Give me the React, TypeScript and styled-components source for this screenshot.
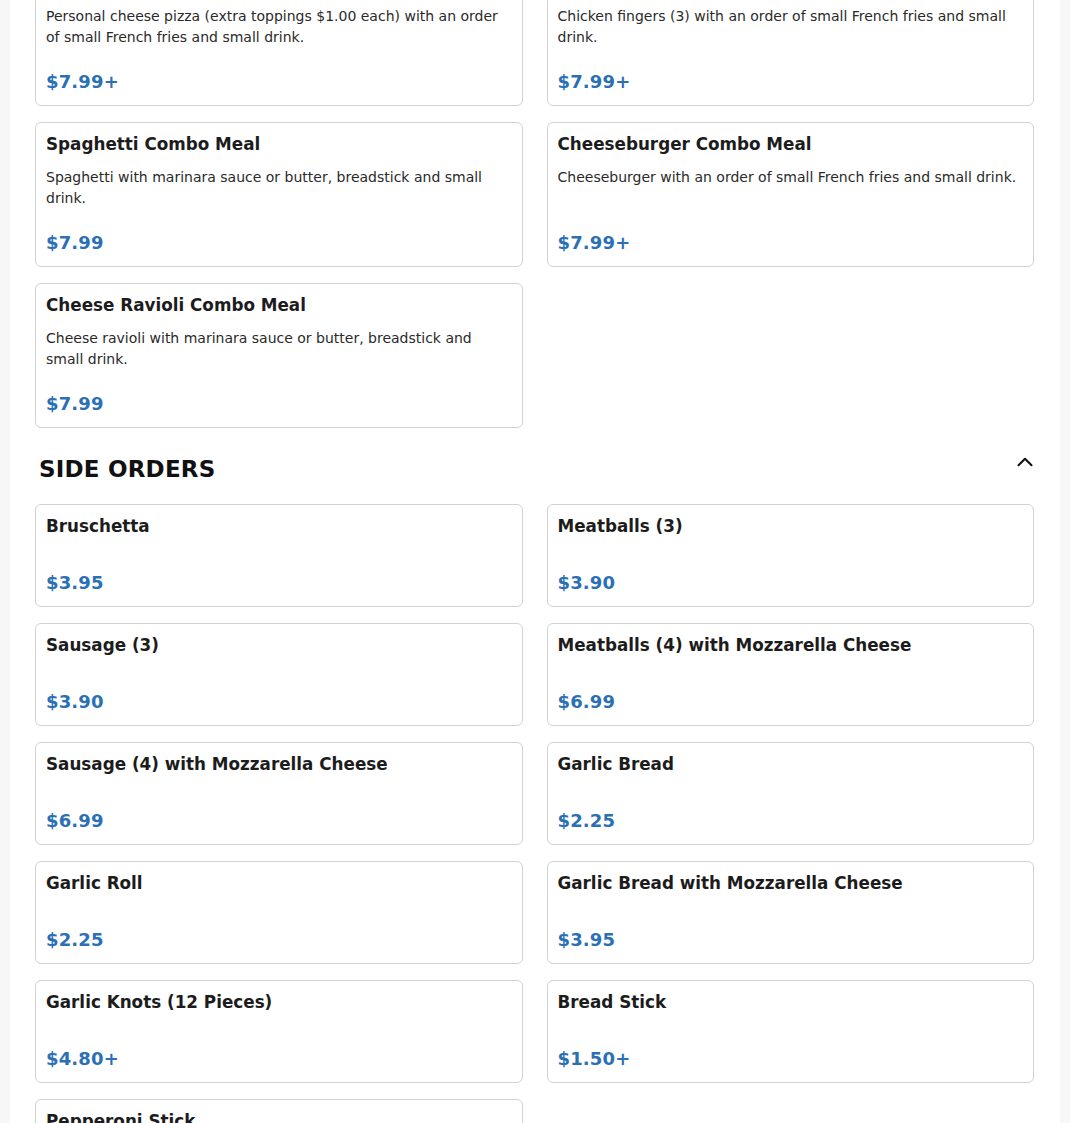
import React, { useLayoutEffect, useRef } from "react";
import styled, { createGlobalStyle } from "styled-components";

const Global = createGlobalStyle`
  html, body { margin: 0; padding: 0; background: #f7f7f7; }
  body { font-family: "DejaVu Sans", Verdana, sans-serif; }
  * { box-sizing: border-box; }
`;

const Page = styled.div`
  margin: 0 10px;
  background: #ffffff;
  padding: 20px 26px 400px 25px;
`;

const Section = styled.section`
  display: flex;
  flex-direction: column;
`;

const SectionHeader = styled.div`
  display: flex;
  align-items: center;
  justify-content: space-between;
  padding: 26px 0 20px 4px;
`;

const SectionTitle = styled.h2`
  margin: 0;
  font-size: 23px;
  line-height: 30px;
  font-weight: 700;
  color: #111;
  letter-spacing: 0.2px;
`;

const Toggle = styled.span`
  display: flex;
  margin-right: -4px;
  margin-top: -14px;
  color: #111;
`;

const Grid = styled.div`
  display: grid;
  grid-template-columns: 1fr 1fr;
  column-gap: 24px;
  row-gap: 16px;
`;

const Card = styled.div`
  display: flex;
  flex-direction: column;
  border: 1px solid #d2d2d2;
  border-radius: 6px;
  padding: 11px 10px 11px;
  background: #fff;
`;

const Title = styled.div`
  font-size: 16.8px;
  line-height: 20px;
  font-weight: 700;
  color: #1c1c1c;
  margin-bottom: 13px;
`;

const Desc = styled.div`
  font-size: 14px;
  line-height: 21px;
  color: #2a2a2a;
`;

const Price = styled.div`
  margin-top: auto;
  padding-top: 22px;
  font-size: 18px;
  line-height: 24px;
  font-weight: 700;
  color: #2b70b5;
  letter-spacing: 0.15px;
`;

type Item = { title: string; desc?: string; price: string };

const combos: Item[] = [
  {
    title: "Kid's Cheese Pizza Combo Meal",
    desc: "Personal cheese pizza (extra toppings $1.00 each) with an order of small French fries and small drink.",
    price: "$7.99+",
  },
  {
    title: "Chicken Fingers Combo Meal",
    desc: "Chicken fingers (3) with an order of small French fries and small drink.",
    price: "$7.99+",
  },
  {
    title: "Spaghetti Combo Meal",
    desc: "Spaghetti with marinara sauce or butter, breadstick and small drink.",
    price: "$7.99",
  },
  {
    title: "Cheeseburger Combo Meal",
    desc: "Cheeseburger with an order of small French fries and small drink.",
    price: "$7.99+",
  },
  {
    title: "Cheese Ravioli Combo Meal",
    desc: "Cheese ravioli with marinara sauce or butter, breadstick and small drink.",
    price: "$7.99",
  },
];

const sides: Item[] = [
  { title: "Bruschetta", price: "$3.95" },
  { title: "Meatballs (3)", price: "$3.90" },
  { title: "Sausage (3)", price: "$3.90" },
  { title: "Meatballs (4) with Mozzarella Cheese", price: "$6.99" },
  { title: "Sausage (4) with Mozzarella Cheese", price: "$6.99" },
  { title: "Garlic Bread", price: "$2.25" },
  { title: "Garlic Roll", price: "$2.25" },
  { title: "Garlic Bread with Mozzarella Cheese", price: "$3.95" },
  { title: "Garlic Knots (12 Pieces)", price: "$4.80+" },
  { title: "Bread Stick", price: "$1.50+" },
  { title: "Pepperoni Stick", price: "$2.50" },
];

const Chevron = () => (
  <svg width="26" height="26" viewBox="0 0 24 24" fill="none" stroke="currentColor" strokeWidth="1.9" strokeLinecap="round" strokeLinejoin="round">
    <path d="m18 15-6-6-6 6" />
  </svg>
);

const MenuCard = ({ item, cardRef }: { item: Item; cardRef?: React.Ref<HTMLDivElement> }) => (
  <Card ref={cardRef}>
    <Title>{item.title}</Title>
    {item.desc && <Desc>{item.desc}</Desc>}
    <Price>{item.price}</Price>
  </Card>
);

export default function App() {
  const firstRef = useRef<HTMLDivElement>(null);

  useLayoutEffect(() => {
    const el = firstRef.current;
    if (!el) return;
    const top = el.getBoundingClientRect().top + window.scrollY;
    window.scrollTo(0, top + 39);
  }, []);

  return (
    <>
      <Global />
      <Page>
        <Section>
          <SectionHeader>
            <SectionTitle>KIDS MENU</SectionTitle>
            <Toggle>
              <Chevron />
            </Toggle>
          </SectionHeader>
          <Grid>
            {combos.map((c, i) => (
              <MenuCard key={c.title} item={c} cardRef={i === 0 ? firstRef : undefined} />
            ))}
          </Grid>
        </Section>
        <Section>
          <SectionHeader>
            <SectionTitle>SIDE ORDERS</SectionTitle>
            <Toggle>
              <Chevron />
            </Toggle>
          </SectionHeader>
          <Grid>
            {sides.map((c) => (
              <MenuCard key={c.title} item={c} />
            ))}
          </Grid>
        </Section>
      </Page>
    </>
  );
}
